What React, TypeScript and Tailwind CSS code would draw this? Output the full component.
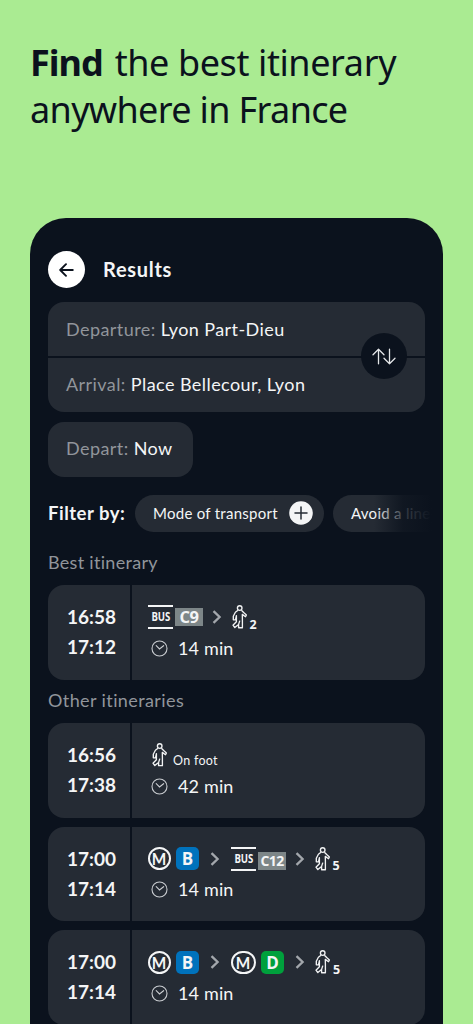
import { ReactNode } from 'react';
import clsx from 'clsx';

type Step =
  | { kind: 'metro'; line: string; color: string; wide?: boolean }
  | { kind: 'bus'; line: string; small?: boolean }
  | { kind: 'walk'; minutes?: number };

type Itinerary = { start: string; end: string; duration: string; steps: Step[] };

const BEST: Itinerary = {
  start: '16:58',
  end: '17:12',
  duration: '14 min',
  steps: [{ kind: 'bus', line: 'C9' }, { kind: 'walk', minutes: 2 }],
};

const OTHERS: Itinerary[] = [
  { start: '16:56', end: '17:38', duration: '42 min', steps: [{ kind: 'walk' }] },
  {
    start: '17:00',
    end: '17:14',
    duration: '14 min',
    steps: [
      { kind: 'metro', line: 'B', color: 'bg-[#0072bc]' },
      { kind: 'bus', line: 'C12', small: true },
      { kind: 'walk', minutes: 5 },
    ],
  },
  {
    start: '17:00',
    end: '17:14',
    duration: '14 min',
    steps: [
      { kind: 'metro', line: 'B', color: 'bg-[#0072bc]' },
      { kind: 'metro', line: 'D', color: 'bg-[#00a03c]', wide: true },
      { kind: 'walk', minutes: 5 },
    ],
  },
];

function WalkIcon() {
  return (
    <svg width="15" height="24" viewBox="0 0 15 24" fill="none" stroke="#f1f2f3" strokeWidth="1.35" strokeLinejoin="round" className="shrink-0">
      <circle cx="7.7" cy="3" r="2.3" />
      <path d="M6 5.3L3.4 7.2 1.3 11.2V14.8h2.2l.9-4.2v6.2L1 20.2l1.8 2.4 3.8-3.2 1.2-3.8M6.6 19.4v3.3h3.8V14.6l-.1-5.2 3.2 2.3 .9-1.7-2.7-2.4-2.3-2.3" />
    </svg>
  );
}

function ClockIcon() {
  return (
    <svg width="17" height="17" viewBox="0 0 17 17" fill="none" stroke="#c9ccd0" strokeWidth="1.1" strokeLinecap="round">
      <circle cx="8.5" cy="8.5" r="7.5" />
      <path d="M5.2 5.7l3.3 3.2 4.1-3.2" />
    </svg>
  );
}

function Chevron() {
  return (
    <svg width="10" height="14" viewBox="0 0 10 14" fill="none" stroke="#a3a7ac" strokeWidth="2.3" className="shrink-0">
      <path d="M1.5 1.2L7.6 7l-6.1 5.8" />
    </svg>
  );
}

function StepBadge({ step }: { step: Step }) {
  if (step.kind === 'metro') {
    return (
      <div className="flex items-center">
        <span
          className={clsx(
            "flex h-[23px] items-center justify-center rounded-full border-2 border-[#f4f5f6] font-['Lato'] text-[17px] leading-none font-bold",
            step.wide ? 'w-[25px]' : 'w-[23px]'
          )}
        >
          <span className="scale-x-90">M</span>
        </span>
        <span className={clsx("ml-[5px] flex size-[23px] items-center justify-center rounded-[5px] font-['Open_Sans'] text-[17px] leading-none font-bold", step.color)}>
          {step.line}
        </span>
      </div>
    );
  }
  if (step.kind === 'bus') {
    return (
      <div className="flex items-center">
        <span className="flex h-6 w-[25px] items-center justify-center border-y-2 border-[#f4f5f6]">
          <span className="scale-x-[0.8] font-['Open_Sans'] text-[12px] leading-none font-bold">BUS</span>
        </span>
        <span
          className={clsx(
            "ml-[2px] flex h-[18px] w-7 items-center justify-center bg-[#7d8688] font-['Open_Sans'] leading-none font-bold",
            step.small ? 'translate-y-[2px] text-[14px] tracking-[-0.6px]' : 'text-[16.5px] tracking-[-0.4px]'
          )}
        >
          {step.line}
        </span>
      </div>
    );
  }
  return (
    <div className={clsx('flex items-center', !step.minutes && 'ml-[4px]')}>
      <WalkIcon />
      {step.minutes ? (
        <span className="ml-[3px] translate-y-[8px] font-['Open_Sans'] text-[12.5px] leading-none font-bold">{step.minutes}</span>
      ) : (
        <span className="ml-[6px] translate-y-[6px] font-['Lato'] text-[12.5px] leading-none tracking-[0.3px]">On foot</span>
      )}
    </div>
  );
}

function ItineraryCard({ item, className }: { item: Itinerary; className?: string }) {
  return (
    <div className={clsx('flex h-[94.5px] shrink-0 gap-[2px] overflow-hidden rounded-2xl', className)}>
      <div className="flex w-[82px] flex-col items-end bg-[#252b34] pt-[17px] pr-[14px] text-[19px] leading-[30px] font-bold">
        <span>{item.start}</span>
        <span>{item.end}</span>
      </div>
      <div className="flex-1 bg-[#252b34] pt-5 pl-4">
        <div className="flex h-6 items-center">
          {item.steps.map((step, i) => (
            <div key={i} className="flex items-center">
              {i > 0 && (
                <span
                  className={clsx(
                    'flex',
                    item.steps[i - 1].kind === 'bus' ? 'ml-[8.5px]' : 'ml-[11px]',
                    step.kind === 'walk' ? 'mr-[10px]' : 'mr-[11px]'
                  )}
                >
                  <Chevron />
                </span>
              )}
              <StepBadge step={step} />
            </div>
          ))}
        </div>
        <div className="mt-[7px] flex h-6 items-center pl-[3px]">
          <ClockIcon />
          <span className="ml-[10px] text-[18px] tracking-[0.15px]">{item.duration}</span>
        </div>
      </div>
    </div>
  );
}

function Field({ label, children, className }: { label: string; children: ReactNode; className?: string }) {
  return (
    <div className={clsx('flex items-center bg-[#252b34] pl-[18px] text-[18px] tracking-[0.43px] whitespace-pre', className)}>
      <span className="text-[#91959b]">{label} </span>
      <span>{children}</span>
    </div>
  );
}

export default function App() {
  return (
    <div className="flex h-[1024px] w-[473px] flex-col overflow-hidden bg-[#aaeb92] font-['Lato',sans-serif]">
      <h1 className="h-[218px] shrink-0 pt-[39px] pl-[30px] font-['Noto_Sans',sans-serif] text-[36px] leading-[47px] text-[#0b121d]">
        <div className="tracking-[-0.4px] whitespace-nowrap">
          <b className="mr-[3px] tracking-[-1px]">Find</b> the best itinerary
        </div>
        <div className="tracking-[-0.65px] whitespace-nowrap">anywhere in France</div>
      </h1>

      <main className="ml-[30px] flex h-[806px] w-[413px] shrink-0 flex-col rounded-t-[36px] bg-[#0b121d] px-[18px] text-[#f4f5f6]">
        <header className="mt-[33px] flex h-[37px] shrink-0 items-center">
          <button className="flex size-[37px] items-center justify-center rounded-full bg-white">
            <svg width="15" height="14" viewBox="0 0 15 14" fill="none" stroke="#0b121d" strokeWidth="1.9" strokeLinecap="round" strokeLinejoin="round">
              <path d="M13.8 7H1.5M7 1.2L1.2 7 7 12.8" />
            </svg>
          </button>
          <h2 className="-mt-[2px] ml-[18px] text-[20px] font-bold tracking-[0.7px]">Results</h2>
        </header>

        <section className="relative mt-[14px] flex h-[110px] shrink-0 flex-col gap-[2px] overflow-hidden rounded-2xl">
          <Field label="Departure:" className="h-[54px]">Lyon Part-Dieu</Field>
          <Field label="Arrival:" className="h-[54px] pb-[2px]">Place Bellecour, Lyon</Field>
          <button className="absolute top-[31px] right-[18px] flex size-[46px] items-center justify-center rounded-full bg-[#0b121d]">
            <svg width="24" height="17" viewBox="0 0 24 17" fill="none" stroke="#e4e6e8" strokeWidth="1.3" strokeLinecap="round" strokeLinejoin="round">
              <path d="M6.5 15.8V1.2M1 6.7l5.5-5.5L12 6.7" />
              <path d="M17.5 1.2v14.6M12 10.3l5.5 5.5 5.5-5.5" />
            </svg>
          </button>
        </section>

        <Field label="Depart:" className="mt-[9.5px] h-[55px] w-[145px] shrink-0 rounded-2xl pb-[1px] tracking-[0.6px]">Now</Field>

        <div className="relative mt-[18px] flex h-[37px] w-[384px] shrink-0 items-center overflow-hidden whitespace-nowrap">
          <span className="w-[87px] shrink-0 pt-[1px] text-[18.5px] font-bold tracking-[0.5px]">Filter by:</span>
          <span className="flex h-[37px] w-[189px] shrink-0 items-center justify-between rounded-full bg-[#252b34] pr-[11px] pl-[18px] text-[15px] tracking-[0.27px]">
            Mode of transport
            <svg width="24" height="24" viewBox="0 0 24 24" fill="none">
              <circle cx="12" cy="12" r="11.8" fill="#f4f5f6" />
              <path d="M12 6v12M6 12h12" stroke="#252b34" strokeWidth="1.5" strokeLinecap="round" />
            </svg>
          </span>
          <span className="ml-[9px] flex h-[37px] w-[150px] shrink-0 items-center rounded-full bg-[#252b34] pl-[18px] text-[15px] tracking-[0.27px]">Avoid a line</span>
          <span className="absolute top-0 right-0 h-[37px] w-[58px] bg-gradient-to-r from-[#0b121d]/0 via-[#0b121d]/80 to-[#0b121d]" />
        </div>

        <h3 className="mt-[16px] h-7 shrink-0 text-[18px] leading-7 tracking-[0.3px] text-[#91959b]">Best itinerary</h3>
        <ItineraryCard item={BEST} className="mt-[9.5px]" />

        <h3 className="mt-[6px] h-7 shrink-0 text-[18px] leading-7 tracking-[0.4px] text-[#91959b]">Other itineraries</h3>
        <div className="mt-[9.5px] flex flex-col gap-[9px]">
          {OTHERS.map((item, i) => (
            <ItineraryCard key={i} item={item} />
          ))}
        </div>
      </main>
    </div>
  );
}
